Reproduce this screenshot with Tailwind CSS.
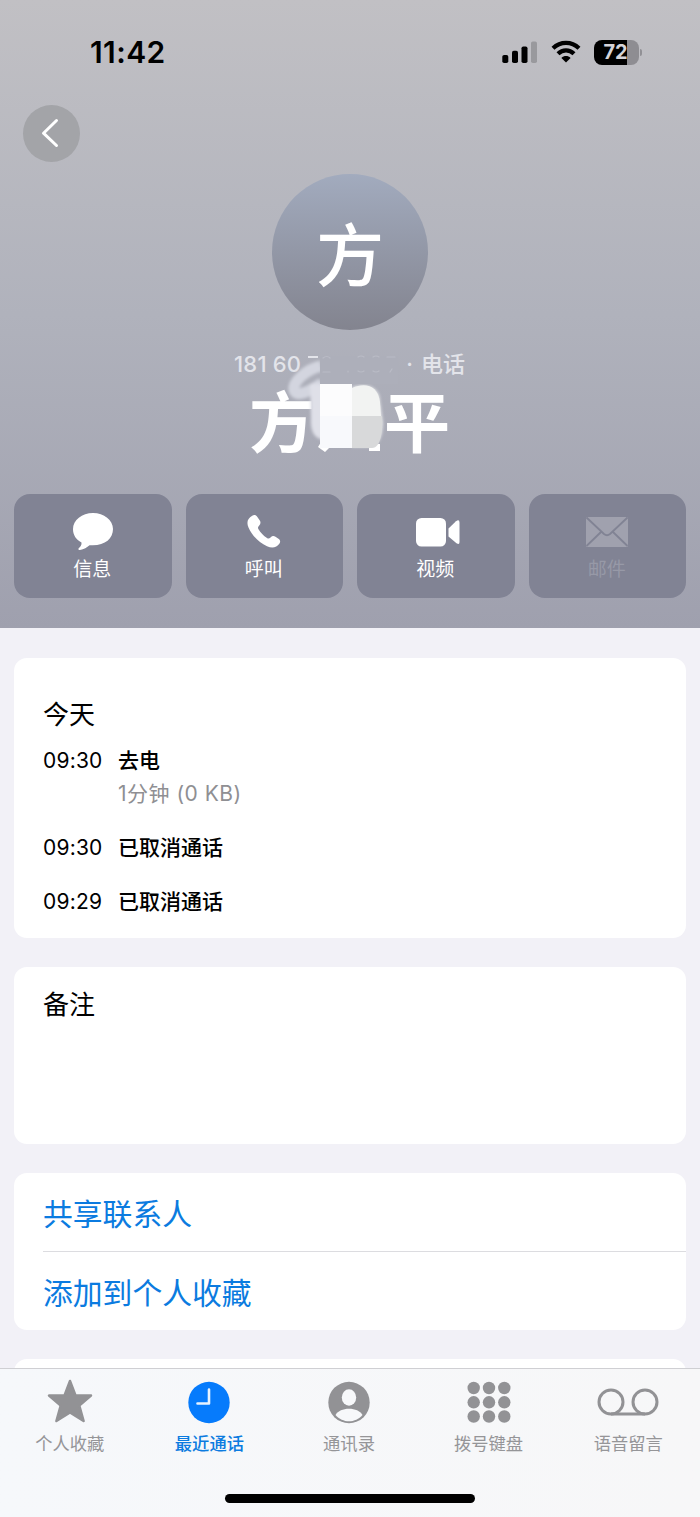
<!DOCTYPE html>
<html lang="zh-CN">
<head>
<meta charset="utf-8">
<title>联系人</title>
<script src="https://cdn.jsdelivr.net/npm/@tailwindcss/browser@4"></script>
</head>
<body class="relative flex h-[1517px] w-[700px] flex-col overflow-hidden bg-[#f2f1f7] font-['Inter','Noto_Sans_CJK_SC',sans-serif] text-black">
<header class="flex h-[628px] shrink-0 flex-col bg-linear-to-b from-[#c1c0c4] via-[#b0b2bc] to-[#9fa0ae]">
  <!-- status bar -->
  <div class="flex h-[105px] items-start justify-between pl-[90px] pr-[58px] pt-[34px]">
    <div class="text-[30px] leading-[36px] font-semibold tracking-[0.4px]">11:42</div>
    <div class="flex h-[36px] items-center">
      <svg class="h-[24px] w-[36px]" viewBox="0 0 36 24"><rect x="1.300" y="15" width="6" height="8" rx="1.800"/><rect x="11" y="10.800" width="6" height="12.200" rx="1.800"/><rect x="20.500" y="6.500" width="6" height="16.500" rx="1.800"/><rect x="30" y="1.500" width="6" height="21.500" rx="1.800" fill="#99999d"/></svg>
      <svg class="ml-[13px] h-[24px] w-[32px]" viewBox="0 0 32 24" fill="none" stroke="#000" stroke-width="4.300"><path d="M3 8.200C10.500 1.200 21.500 1.200 29 8.200"/><path d="M8 13.700C12.700 9.300 19.300 9.300 24 13.700"/><path d="M16 22.500l-4.600-4.500c2.500-2.600 6.700-2.600 9.200 0z" fill="#000" stroke="none"/></svg>
      <div class="ml-[12px] flex h-[25px] w-[45px] items-center justify-center overflow-hidden rounded-[8px] bg-linear-to-r from-black from-[73%] to-[#8e8d92] to-[73%] text-[20px] leading-[25px] font-bold text-[#d5d4d9]"><span class="-ml-[2px]">72</span></div>
      <div class="ml-[1px] h-[7px] w-[2px] rounded-r-full bg-[#919095]"></div>
    </div>
  </div>
  <div class="ml-[23px] flex size-[57px] shrink-0 items-center justify-center rounded-full bg-[#a3a4a8]">
    <svg class="size-[57px]" viewBox="0 0 57 57" fill="none" stroke="#fff" stroke-width="3" stroke-linecap="round" stroke-linejoin="round"><path d="M33.500 15.500L20.500 28.200L33.500 40.500"/></svg>
  </div>
  <div class="mt-[12px] flex size-[156px] shrink-0 items-center justify-center self-center rounded-full bg-linear-to-b from-[#a2abbe] to-[#83848f] text-[68px] leading-[156px] font-medium text-white"><span class="pt-[8px]">方</span></div>
  <!-- masked number and name -->
  <div class="relative mt-[14px] h-[150px] shrink-0">
    <div class="flex h-[40px] items-center justify-between pl-[234px] pr-[235px] pt-[1px] text-[22px] font-medium text-[#e3e4ea]">
      <span class="tracking-[0.2px]">181 60</span><span class="flex items-center gap-[8px]"><span>·</span><span>电话</span></span>
    </div>
    <div class="flex h-[76px] items-center justify-between pl-[249px] pr-[250px] pt-[2px] text-[66px] leading-[76px] font-bold text-white"><span>方</span><span>平</span></div>
    <svg class="absolute left-[280px] top-0 h-[120px] w-[130px]" viewBox="280 344 130 120">
      <defs><filter id="soft" x="-20%" y="-20%" width="140%" height="140%"><feGaussianBlur stdDeviation="1.500"/></filter></defs>
      <path d="M308 357h10" stroke="#e3e4ea" stroke-width="2"/>
      <g filter="url(#soft)">
        <path d="M321 366C307 369 292 382 294 390C297 398 310 391 322 383" fill="none" stroke="#d3d5df" stroke-width="11"/>
        <path d="M310 384H324V440C315 439 310 432 311 418Z" fill="#dfe0e8"/>
        <path d="M352 387C368 382 380 388 380 401L383 423C382 440 378 447 366 447H352Z" fill="#e4e5e8"/>
      </g>
      <path d="M320 356h78v28h-78z" fill="#adafba"/>
      <path d="M318 447l5-8 8 7-6 6zM369 444h11v7h-11z" fill="#fff"/>
      <path d="M320 384h32v32h-32z" fill="#fcfcfd"/><path d="M320 416h32v32h-32z" fill="#f8f9fc"/>
      <path d="M352 388C366 382 378 386 380 402L381 416H352Z" fill="#f2f3f2"/><path d="M352 416h30c1 14-1 32-10 32h-20z" fill="#d8d9da"/>
      <g fill="none" stroke="#babcc6" stroke-width="1.200" stroke-linecap="round"><path d="M323 358q4-3 7 0"/><path d="M323 372h7"/><path d="M348 371v1"/><path d="M358 357q3-2 6 0M358 371q3 2 6 0"/><path d="M373 357q3-2 6 0M373 371q3 2 6 0"/><path d="M387 357h8M390 372l2-3"/></g>
    </svg>
  </div>
  <!-- actions -->
  <div class="grid shrink-0 grid-cols-4 gap-[14px] px-[14px] text-[19px] leading-[24px] text-white">
    <div class="flex h-[104px] flex-col items-center rounded-[16px] bg-[#818394] pt-[18px]">
      <svg class="h-[40px] w-[48px]" viewBox="0 0 48 40" fill="#fff"><path d="M24 1C13 1 4 8 4 17C4 23 7 27.500 12.500 30.500C13 33 11 35 9.500 36.500C9 37.500 10 38 11 38C15 37.500 18 35 20.500 33.200C35 34.500 44 27 44 17C44 8 35 1 24 1Z"/></svg><span class="mt-[6px] -ml-[1px]">信息</span>
    </div>
    <div class="flex h-[104px] flex-col items-center rounded-[16px] bg-[#818394] pt-[18px]">
      <svg class="h-[40px] w-[48px]" viewBox="0 0 48 40" fill="#fff"><path d="M12.200 3.800C14 2.500 16 3 17.200 4.700L19.800 8.600C21 10.500 20.500 12 19.200 13.500C17.800 15 17.700 15.800 18.500 17.200C20.500 20.600 23.500 23.800 27 26C28.300 26.800 29.200 26.700 30.500 25.400C32.200 23.900 33.700 23.600 35.500 24.800L38.800 27C40.400 28.200 40.500 30 39.500 31.500C36.500 36 32 36.600 27 34.300C19 30.500 12 23.500 8.500 15.500C6.300 10.500 7.500 6.500 12.200 3.800Z"/></svg><span class="mt-[6px] -ml-[1px]">呼叫</span>
    </div>
    <div class="flex h-[104px] flex-col items-center rounded-[16px] bg-[#818394] pt-[18px]">
      <svg class="h-[40px] w-[48px]" viewBox="0 0 48 40" fill="#fff"><rect x="4" y="6" width="30" height="28.500" rx="5.500"/><path d="M36.500 16.500L44 9.200Q47.500 7 47.500 10.500V30Q47.500 33.200 44.500 31.200L36.500 24.500Z"/></svg><span class="mt-[6px] -ml-[1px]">视频</span>
    </div>
    <div class="flex h-[104px] flex-col items-center rounded-[16px] bg-[#818394] pt-[18px] text-[#9799a7]">
      <svg class="h-[40px] w-[48px]" viewBox="0 0 48 40"><rect x="3" y="5" width="42" height="30" rx="1.500" fill="#a0a1ae"/><path d="M3.500 5.500L21 22Q24 24.500 27 22L44.500 5.500M3.500 34L18 20M44.500 34L30 20" fill="none" stroke="#818394" stroke-width="1.800"/></svg><span class="mt-[6px] -ml-[1px]">邮件</span>
    </div>
  </div>
</header>
<main class="flex flex-1 flex-col gap-[29px] px-[14px] pt-[30px]">
  <section class="h-[280px] shrink-0 rounded-[13px] bg-white px-[29px] pt-[39px]">
    <h2 class="text-[26px] leading-[36px]">今天</h2>
    <div class="grid grid-cols-[75px_1fr] text-[21px] leading-[30px]">
      <span class="mt-[13px] tracking-[0.2px]">09:30</span><span class="mt-[13px] font-medium">去电</span>
      <span></span><span class="mt-[3px] tracking-[0.5px] text-[#8f8f93]">1分钟 (0 KB)</span>
      <span class="mt-[24px] tracking-[0.2px]">09:30</span><span class="mt-[24px] font-medium">已取消通话</span>
      <span class="mt-[24px] tracking-[0.2px]">09:29</span><span class="mt-[24px] font-medium">已取消通话</span>
    </div>
  </section>
  <section class="h-[177px] shrink-0 rounded-[13px] bg-white px-[29px] pt-[20px] text-[26px] leading-[36px]">备注</section>
  <section class="flex h-[157px] shrink-0 flex-col rounded-[13px] bg-white pl-[29px] text-[29.800px] text-[#0b7be0]">
    <div class="flex h-[79px] items-center border-b border-[#dcdce0] pt-[4px]">共享联系人</div>
    <div class="flex h-[78px] items-center pt-[4px]">添加到个人收藏</div>
  </section>
  <section class="h-[30px] shrink-0 rounded-[13px] bg-white"></section>
</main>
<!-- tab bar -->
<nav class="absolute inset-x-0 bottom-0 flex h-[149px] flex-col border-t border-[#cfcfd3] bg-linear-to-r from-[#f6f8fb] to-[#f7f7f8] text-[17.300px] leading-[24px] text-[#959598]">
  <div class="grid grid-cols-5 pr-[2px] pt-[8px]">
    <div class="flex flex-col items-center"><svg class="h-[50px] w-[64px]" viewBox="0 0 64 50" fill="#929295" stroke="#929295" stroke-width="2.500" stroke-linejoin="round"><path d="M32 4L37.500 18.500H53L41.300 28.500L45.600 44L32 35.500L18.400 44L22.700 28.500L11 18.500H26.500Z"/></svg><span class="mt-[5px]">个人收藏</span></div>
    <div class="flex flex-col items-center font-medium text-[#0b7be0]"><svg class="h-[50px] w-[64px]" viewBox="0 0 64 50"><circle cx="32" cy="25.500" r="20.700" fill="#067bfc"/><path d="M32 12.500V26.500H20.500" fill="none" stroke="#e8f3ff" stroke-width="2.600" stroke-linecap="round" stroke-linejoin="round"/></svg><span class="mt-[5px]">最近通话</span></div>
    <div class="flex flex-col items-center"><svg class="h-[50px] w-[64px]" viewBox="0 0 64 50"><circle cx="32" cy="25.500" r="20.700" fill="#929295"/><ellipse cx="32" cy="20.500" rx="7.200" ry="8.200" fill="#f7f8fa"/><path d="M18.500 38C21 34 26 31.800 32 31.800S43 34 45.500 38C42 42 37 44.300 32 44.300S22 42 18.500 38Z" fill="#f7f8fa"/></svg><span class="mt-[5px]">通讯录</span></div>
    <div class="flex flex-col items-center"><svg class="h-[50px] w-[64px]" viewBox="0 0 64 50" fill="#929295"><circle cx="16.700" cy="11" r="6.200"/><circle cx="32" cy="11" r="6.200"/><circle cx="47.300" cy="11" r="6.200"/><circle cx="16.700" cy="25.300" r="6.200"/><circle cx="32" cy="25.300" r="6.200"/><circle cx="47.300" cy="25.300" r="6.200"/><circle cx="16.700" cy="39.500" r="6.200"/><circle cx="32" cy="39.500" r="6.200"/><circle cx="47.300" cy="39.500" r="6.200"/></svg><span class="mt-[5px]">拨号键盘</span></div>
    <div class="flex flex-col items-center"><svg class="h-[50px] w-[64px]" viewBox="0 0 64 50" fill="none" stroke="#929295" stroke-width="3"><circle cx="15" cy="25" r="12"/><circle cx="49" cy="25" r="12"/><path d="M15 37H49"/></svg><span class="mt-[5px]">语音留言</span></div>
  </div>
  <div class="mt-[38px] h-[9px] w-[250px] self-center rounded-full bg-black"></div>
</nav>
</body>
</html>
